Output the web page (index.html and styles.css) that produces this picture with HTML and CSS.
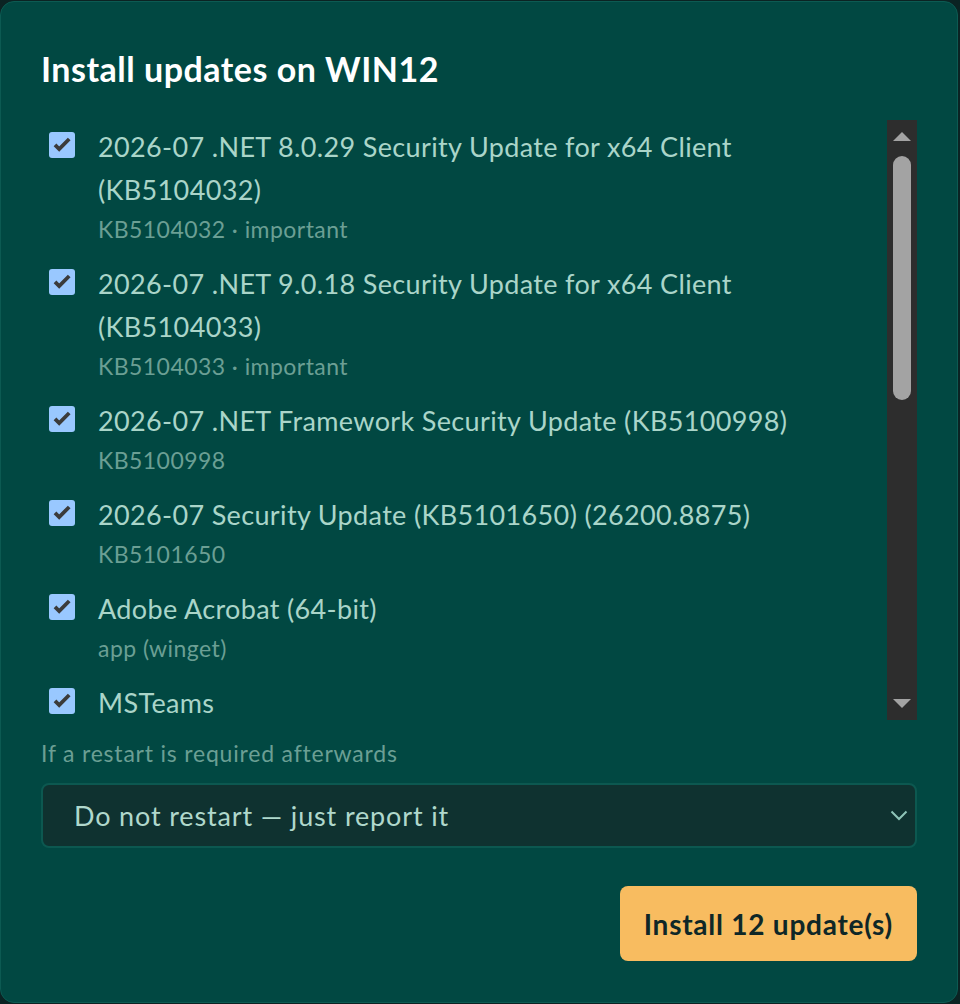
FILE: index.html
```html
<!DOCTYPE html>
<html lang="en">
<head>
<meta charset="utf-8">
<title>Install updates</title>
<link rel="stylesheet" href="styles.css">
</head>
<body>
<div class="dialog">
  <h2 class="title">Install updates on WIN12</h2>
  <div class="listwrap">
    <ul class="list">
      <li class="item">
        <span class="box"><svg viewBox="0 0 26 26" width="26" height="26"><path d="M6 12.8 L10.2 17 L20.2 7" fill="none" stroke="#3b3b3b" stroke-width="3.8"/></svg></span>
        <div class="text"><div class="name">2026-07 .NET 8.0.29 Security Update for x64 Client (KB5104032)</div><div class="meta">KB5104032 · important</div></div>
      </li>
      <li class="item">
        <span class="box"><svg viewBox="0 0 26 26" width="26" height="26"><path d="M6 12.8 L10.2 17 L20.2 7" fill="none" stroke="#3b3b3b" stroke-width="3.8"/></svg></span>
        <div class="text"><div class="name">2026-07 .NET 9.0.18 Security Update for x64 Client (KB5104033)</div><div class="meta">KB5104033 · important</div></div>
      </li>
      <li class="item">
        <span class="box"><svg viewBox="0 0 26 26" width="26" height="26"><path d="M6 12.8 L10.2 17 L20.2 7" fill="none" stroke="#3b3b3b" stroke-width="3.8"/></svg></span>
        <div class="text"><div class="name">2026-07 .NET Framework Security Update (KB5100998)</div><div class="meta">KB5100998</div></div>
      </li>
      <li class="item">
        <span class="box"><svg viewBox="0 0 26 26" width="26" height="26"><path d="M6 12.8 L10.2 17 L20.2 7" fill="none" stroke="#3b3b3b" stroke-width="3.8"/></svg></span>
        <div class="text"><div class="name">2026-07 Security Update (KB5101650) (26200.8875)</div><div class="meta">KB5101650</div></div>
      </li>
      <li class="item">
        <span class="box"><svg viewBox="0 0 26 26" width="26" height="26"><path d="M6 12.8 L10.2 17 L20.2 7" fill="none" stroke="#3b3b3b" stroke-width="3.8"/></svg></span>
        <div class="text"><div class="name">Adobe Acrobat (64-bit)</div><div class="meta">app (winget)</div></div>
      </li>
      <li class="item">
        <span class="box"><svg viewBox="0 0 26 26" width="26" height="26"><path d="M6 12.8 L10.2 17 L20.2 7" fill="none" stroke="#3b3b3b" stroke-width="3.8"/></svg></span>
        <div class="text"><div class="name">MSTeams</div></div>
      </li>
    </ul>
    <div class="scrollbar" aria-hidden="true">
      <span class="arrow up"></span>
      <span class="thumb"></span>
      <span class="arrow down"></span>
    </div>
  </div>
  <div class="label">If a restart is required afterwards</div>
  <div class="select">
    <span class="select-value">Do not restart — just report it</span>
    <svg class="chevron" viewBox="0 0 18 11" width="18" height="11"><path d="M1.5 1.5 L9 9 L16.5 1.5" fill="none" stroke="#8ec5b8" stroke-width="2"/></svg>
  </div>
  <div class="actions">
    <button class="primary" type="button">Install 12 update(s)</button>
  </div>
</div>
</body>
</html>
```

FILE: styles.css
```css
* { box-sizing: border-box; }
html, body { margin: 0; padding: 0; }
body {
  background: #0b2323;
  width: 960px;
  height: 1004px;
  overflow: hidden;
  font-family: Lato, "Open Sans", sans-serif;
  padding-top: 1px;
}
.dialog {
  width: 958px;
  height: 1002px;
  background: #014842;
  border: 1px solid #0c5a52;
  border-radius: 14px;
  padding: 47px 40px 40px 40px;
  display: flex;
  flex-direction: column;
}
.title {
  margin: 0;
  font-size: 34px;
  line-height: 40px;
  font-weight: 700;
  letter-spacing: 0.5px;
  color: #ffffff;
}
.listwrap {
  margin-top: 31px;
  height: 600px;
  display: flex;
}
.list {
  flex: 1;
  list-style: none;
  margin: 0;
  padding: 5px 0 0 0;
  overflow: hidden;
}
.item {
  display: flex;
  align-items: flex-start;
  gap: 23px;
  padding-left: 8px;
  margin-bottom: 14px;
}
.box {
  flex: none;
  width: 26px;
  height: 26px;
  margin-top: 7px;
  border-radius: 3px;
  background: #99c8ff;
  display: block;
}
.box svg { display: block; }
.text { flex: 1; padding-right: 20px; }
.name {
  font-size: 27px;
  line-height: 43px;
  letter-spacing: 0.35px;
  color: #aad5c9;
}
.meta {
  font-size: 23px;
  line-height: 37px;
  letter-spacing: 0.45px;
  color: #6b9f94;
}
.scrollbar {
  flex: none;
  width: 30px;
  background: #2d2d2d;
  display: flex;
  flex-direction: column;
  align-items: center;
}
.arrow {
  width: 0;
  height: 0;
  border-left: 9px solid transparent;
  border-right: 9px solid transparent;
}
.arrow.up {
  margin-top: 12px;
  border-bottom: 9px solid #a3a3a3;
}
.arrow.down {
  margin-top: auto;
  margin-bottom: 12px;
  border-top: 9px solid #a3a3a3;
}
.thumb {
  margin-top: 15px;
  width: 18px;
  height: 244px;
  border-radius: 9px;
  background: #a3a3a3;
}
.label {
  margin-top: 15px;
  font-size: 23px;
  line-height: 37px;
  letter-spacing: 0.8px;
  color: #6b9f94;
}
.select {
  margin-top: 11px;
  height: 65px;
  border: 2px solid #0c5850;
  border-radius: 8px;
  background: #0f3230;
  display: flex;
  align-items: center;
  padding: 0 7px 0 31px;
}
.select-value {
  flex: 1;
  font-size: 27px;
  letter-spacing: 0.85px;
  color: #b0d8cc;
}
.chevron { display: block; flex: none; }
.actions {
  margin-top: 38px;
  display: flex;
  justify-content: flex-end;
}
.primary {
  height: 75px;
  padding: 0 24px;
  border: none;
  border-radius: 8px;
  background: #f8bc60;
  color: #0f2727;
  font-family: Lato, "Open Sans", sans-serif;
  font-size: 28px;
  font-weight: 700;
  letter-spacing: 0.75px;
}
```
